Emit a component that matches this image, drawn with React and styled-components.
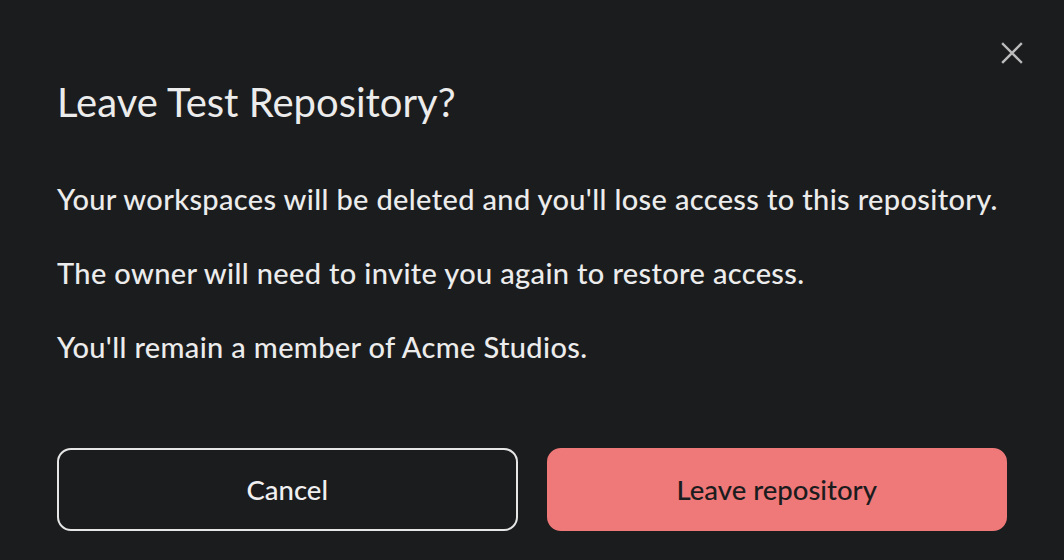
import React from "react";
import styled, { createGlobalStyle } from "styled-components";

const GlobalStyle = createGlobalStyle`
  html, body {
    margin: 0;
    padding: 0;
    background: #1b1c1e;
  }
  body {
    font-family: Lato, "Open Sans", sans-serif;
    -webkit-font-smoothing: antialiased;
  }
`;

const Dialog = styled.div`
  position: relative;
  box-sizing: border-box;
  width: 1064px;
  height: 560px;
  background: #1b1c1e;
  color: #ececec;
  padding: 78px 57px 29px;
  display: flex;
  flex-direction: column;
`;

const CloseButton = styled.button`
  position: absolute;
  top: 40px;
  right: 39px;
  width: 26px;
  height: 26px;
  padding: 0;
  border: none;
  background: transparent;
  color: #bcbcbc;
  display: flex;
  align-items: center;
  justify-content: center;
  cursor: pointer;
`;

const Title = styled.h2`
  margin: 0;
  font-size: 40px;
  font-weight: 400;
  line-height: 48px;
`;

const Body = styled.div`
  margin-top: 55px;
  display: flex;
  flex-direction: column;
  gap: 38px;
`;

const Text = styled.p`
  margin: 0;
  font-size: 29px;
  line-height: 36px;
  font-weight: 500;
  letter-spacing: 0.35px;
`;

const Actions = styled.div`
  margin-top: auto;
  display: grid;
  grid-template-columns: 1fr 1fr;
  gap: 29px;
`;

const Button = styled.button`
  box-sizing: border-box;
  height: 83px;
  border-radius: 14px;
  font-family: inherit;
  font-size: 27.5px;
  font-weight: 500;
  cursor: pointer;
  border: 2px solid ${(p) => (p.$danger ? "#ef7878" : "#e6e6e6")};
  background: ${(p) => (p.$danger ? "#ef7878" : "transparent")};
  color: ${(p) => (p.$danger ? "#1b1c1e" : "#f0f0f0")};
`;

export default function App() {
  return (
    <>
      <GlobalStyle />
      <Dialog>
        <CloseButton aria-label="Close">
          <svg width="22" height="22" viewBox="0 0 22 22" fill="none">
            <path
              d="M2 2L20 20M20 2L2 20"
              stroke="currentColor"
              strokeWidth="2.4"
              strokeLinecap="square"
            />
          </svg>
        </CloseButton>
        <Title>Leave Test Repository?</Title>
        <Body>
          <Text>
            Your workspaces will be deleted and you'll lose access to this
            repository.
          </Text>
          <Text>The owner will need to invite you again to restore access.</Text>
          <Text>You'll remain a member of Acme Studios.</Text>
        </Body>
        <Actions>
          <Button>Cancel</Button>
          <Button $danger>Leave repository</Button>
        </Actions>
      </Dialog>
    </>
  );
}
